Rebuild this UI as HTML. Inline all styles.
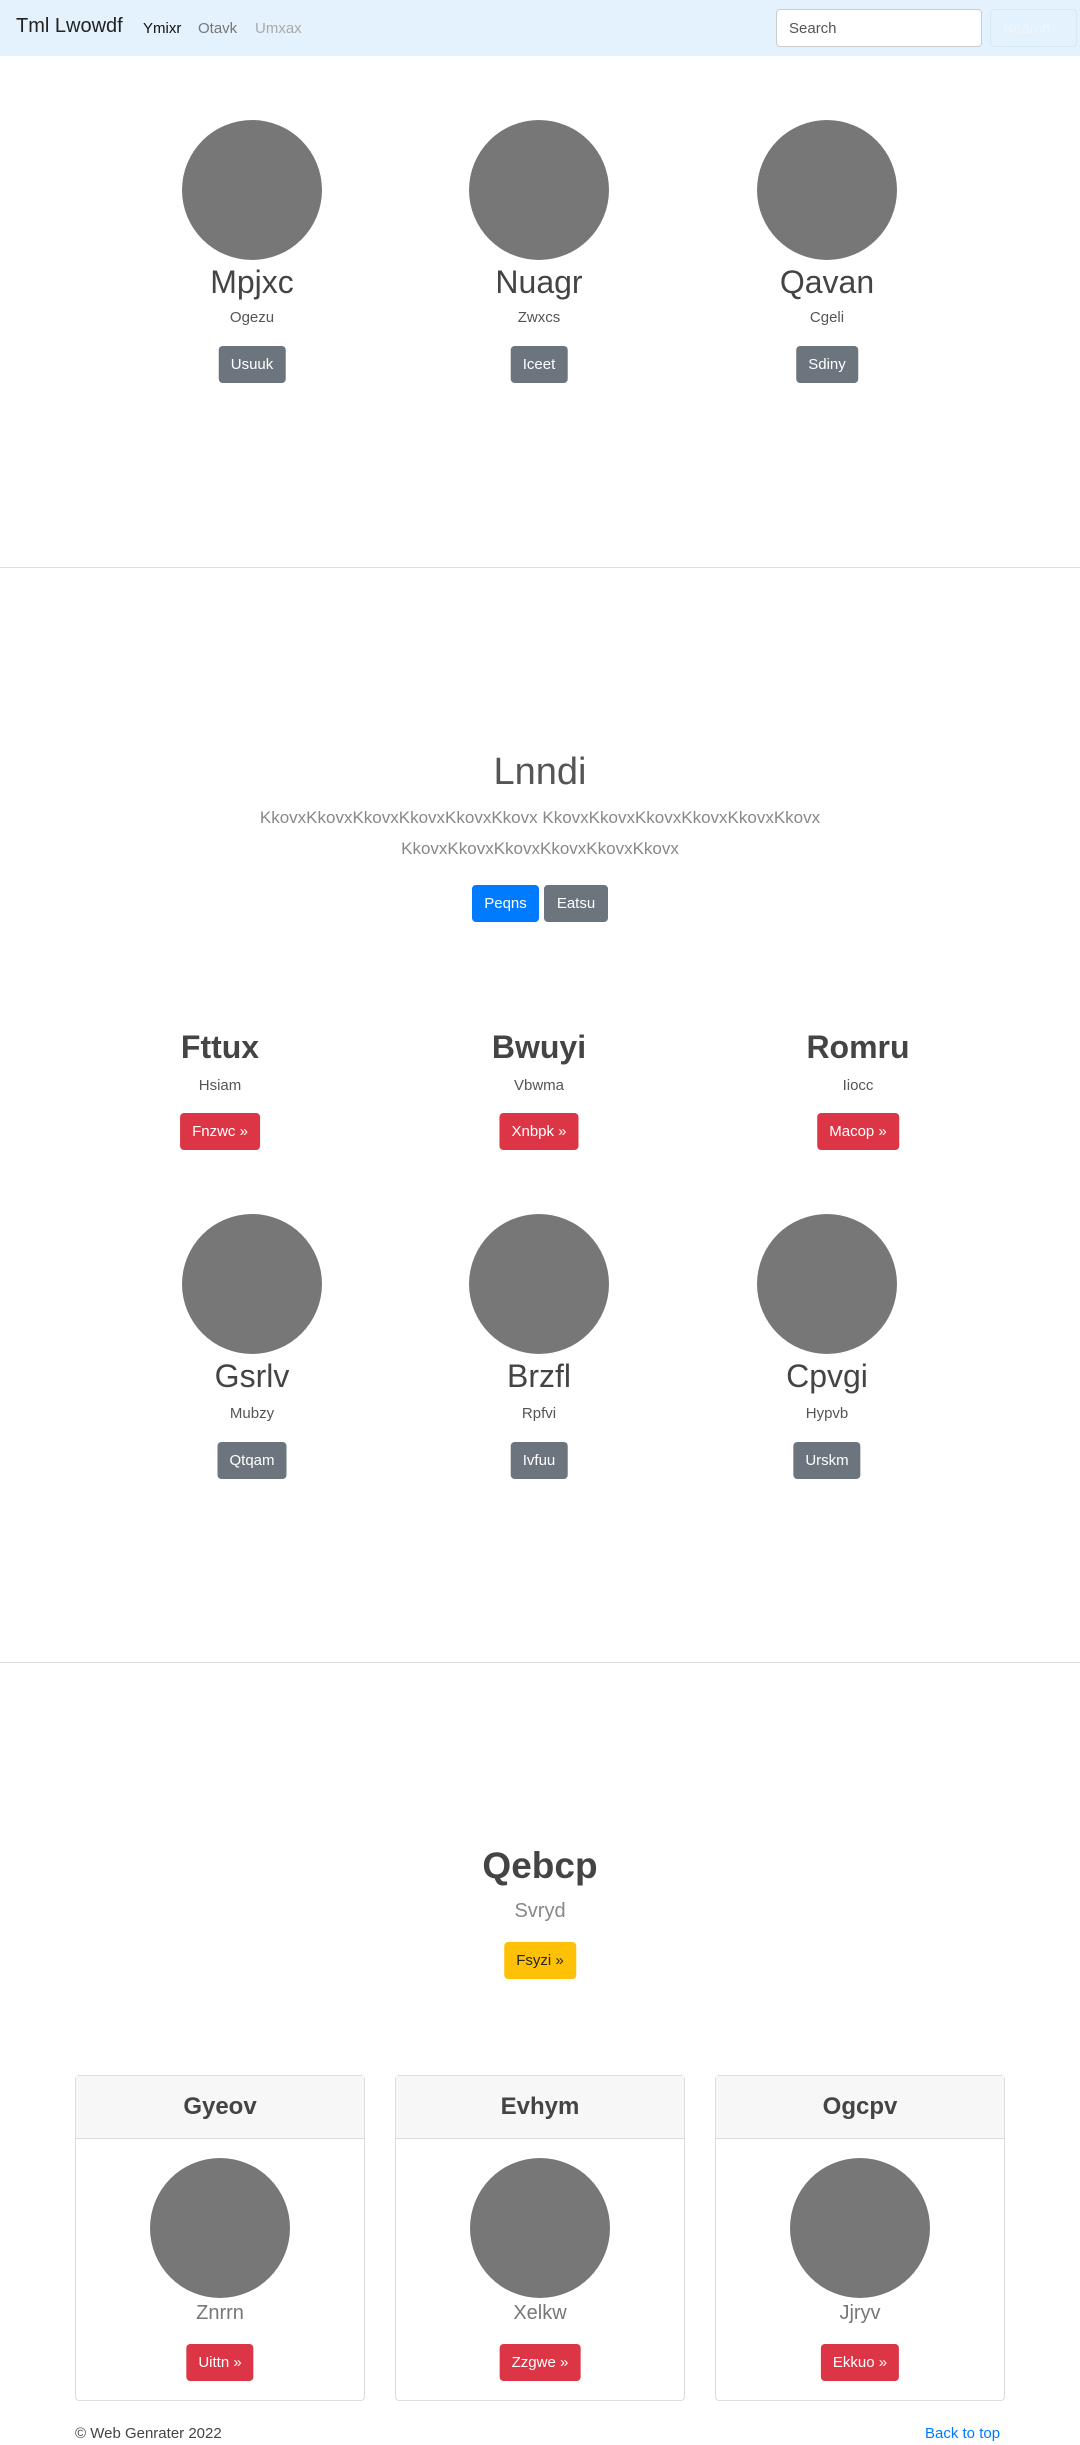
<!DOCTYPE html>
<html><head><meta charset="utf-8"><style>
*{box-sizing:border-box;margin:0;padding:0}
body{width:1080px;height:2445px;position:relative;font-family:"Liberation Sans",sans-serif;color:#212529;background:#fff;overflow:hidden}
.a{position:absolute}
.c{position:absolute;text-align:center;transform:translateX(-50%);white-space:nowrap}
.circ{position:absolute;width:140px;height:140px;border-radius:50%;background:#777;transform:translateX(-50%)}
.btn{position:absolute;transform:translateX(-50%);height:37px;line-height:37px;padding:0 12px;border-radius:4px;color:#fff;font-size:15px;white-space:nowrap}
.g{background:#6c757d}.r{background:#dc3545}
.nm{font-size:32px;color:#444;line-height:40px}
.sb{font-size:15px;color:#555;line-height:20px}
.bd{font-size:32px;font-weight:bold;color:#444;line-height:40px}
hr{position:absolute;left:0;width:1080px;border:0;border-top:1px solid #ddd}
.card{position:absolute;top:2075px;width:290px;height:326px;border:1px solid #ddd;border-radius:4px}
.ch{height:63px;background:#f7f7f7;border-bottom:1px solid #ddd;text-align:center;line-height:62px;font-size:24px;font-weight:bold;color:#444}
</style></head><body>
<div class="a" style="left:0;top:0;width:1080px;height:56px;background:#e3f2fd"></div>
<div class="a" style="left:16px;top:15px;font-size:20px;color:#222">Tml Lwowdf</div>
<div class="a" style="left:143px;top:20px;font-size:15px;color:#111">Ymixr</div>
<div class="a" style="left:198px;top:20px;font-size:15px;color:#777">Otavk</div>
<div class="a" style="left:255px;top:20px;font-size:15px;color:#aaa">Umxax</div>
<div class="a" style="left:776px;top:9px;width:206px;height:38px;background:#fff;border:1px solid #ccc;border-radius:4px;font-size:15px;color:#555;padding:10px 12px">Search</div>
<div class="a" style="left:990px;top:9px;width:87px;height:38px;border:1px solid #d6e8f5;border-radius:4px;font-size:15px;color:#eef6fc;padding:10px 12px">Search</div>

<div class="circ" style="left:252px;top:120px"></div><div class="circ" style="left:539px;top:120px"></div><div class="circ" style="left:827px;top:120px"></div>
<div class="c nm" style="left:252px;top:262px">Mpjxc</div><div class="c nm" style="left:539px;top:262px">Nuagr</div><div class="c nm" style="left:827px;top:262px">Qavan</div>
<div class="c sb" style="left:252px;top:308px">Ogezu</div><div class="c sb" style="left:539px;top:308px">Zwxcs</div><div class="c sb" style="left:827px;top:308px">Cgeli</div>
<div class="btn g" style="left:252px;top:346px">Usuuk</div><div class="btn g" style="left:539px;top:346px">Iceet</div><div class="btn g" style="left:827px;top:346px">Sdiny</div>

<hr style="top:567px">
<div class="c" style="left:540px;top:747px;font-size:38px;font-weight:300;color:#555;line-height:50px">Lnndi</div>
<div class="c" style="left:540px;top:802px;font-size:17px;color:#888;line-height:31px">KkovxKkovxKkovxKkovxKkovxKkovx KkovxKkovxKkovxKkovxKkovxKkovx<br>KkovxKkovxKkovxKkovxKkovxKkovx</div>
<div class="a" style="left:472px;top:885px;width:67px;height:37px;line-height:37px;text-align:center;background:#007bff;color:#fff;border-radius:4px;font-size:15px">Peqns</div>
<div class="a" style="left:544px;top:885px;width:64px;height:37px;line-height:37px;text-align:center;background:#6c757d;color:#fff;border-radius:4px;font-size:15px">Eatsu</div>

<div class="c bd" style="left:220px;top:1027px">Fttux</div><div class="c bd" style="left:539px;top:1027px">Bwuyi</div><div class="c bd" style="left:858px;top:1027px">Romru</div>
<div class="c sb" style="left:220px;top:1076px">Hsiam</div><div class="c sb" style="left:539px;top:1076px">Vbwma</div><div class="c sb" style="left:858px;top:1076px">Iiocc</div>
<div class="btn r" style="left:220px;top:1113px">Fnzwc »</div><div class="btn r" style="left:539px;top:1113px">Xnbpk »</div><div class="btn r" style="left:858px;top:1113px">Macop »</div>

<div class="circ" style="left:252px;top:1214px"></div><div class="circ" style="left:539px;top:1214px"></div><div class="circ" style="left:827px;top:1214px"></div>
<div class="c nm" style="left:252px;top:1356px">Gsrlv</div><div class="c nm" style="left:539px;top:1356px">Brzfl</div><div class="c nm" style="left:827px;top:1356px">Cpvgi</div>
<div class="c sb" style="left:252px;top:1404px">Mubzy</div><div class="c sb" style="left:539px;top:1404px">Rpfvi</div><div class="c sb" style="left:827px;top:1404px">Hypvb</div>
<div class="btn g" style="left:252px;top:1442px">Qtqam</div><div class="btn g" style="left:539px;top:1442px">Ivfuu</div><div class="btn g" style="left:827px;top:1442px">Urskm</div>

<hr style="top:1662px">
<div class="c" style="left:540px;top:1843px;font-size:37px;font-weight:bold;color:#444;line-height:46px">Qebcp</div>
<div class="c" style="left:540px;top:1899px;font-size:20px;color:#888;line-height:24px">Svryd</div>
<div class="btn" style="left:540px;top:1942px;background:#ffc107;color:#212529">Fsyzi »</div>

<div class="card" style="left:75px"><div class="ch">Gyeov</div></div>
<div class="card" style="left:395px"><div class="ch">Evhym</div></div>
<div class="card" style="left:715px"><div class="ch">Ogcpv</div></div>
<div class="circ" style="left:220px;top:2158px"></div><div class="circ" style="left:540px;top:2158px"></div><div class="circ" style="left:860px;top:2158px"></div>
<div class="c" style="left:220px;top:2302px;font-size:20px;color:#777">Znrrn</div><div class="c" style="left:540px;top:2302px;font-size:20px;color:#777">Xelkw</div><div class="c" style="left:860px;top:2302px;font-size:20px;color:#777">Jjryv</div>
<div class="btn r" style="left:220px;top:2344px">Uittn »</div><div class="btn r" style="left:540px;top:2344px">Zzgwe »</div><div class="btn r" style="left:860px;top:2344px">Ekkuo »</div>

<div class="a" style="left:75px;top:2425px;font-size:15px;color:#444">© Web Genrater 2022</div>
<div class="a" style="left:925px;top:2425px;font-size:15px;color:#007bff">Back to top</div>
</body></html>
